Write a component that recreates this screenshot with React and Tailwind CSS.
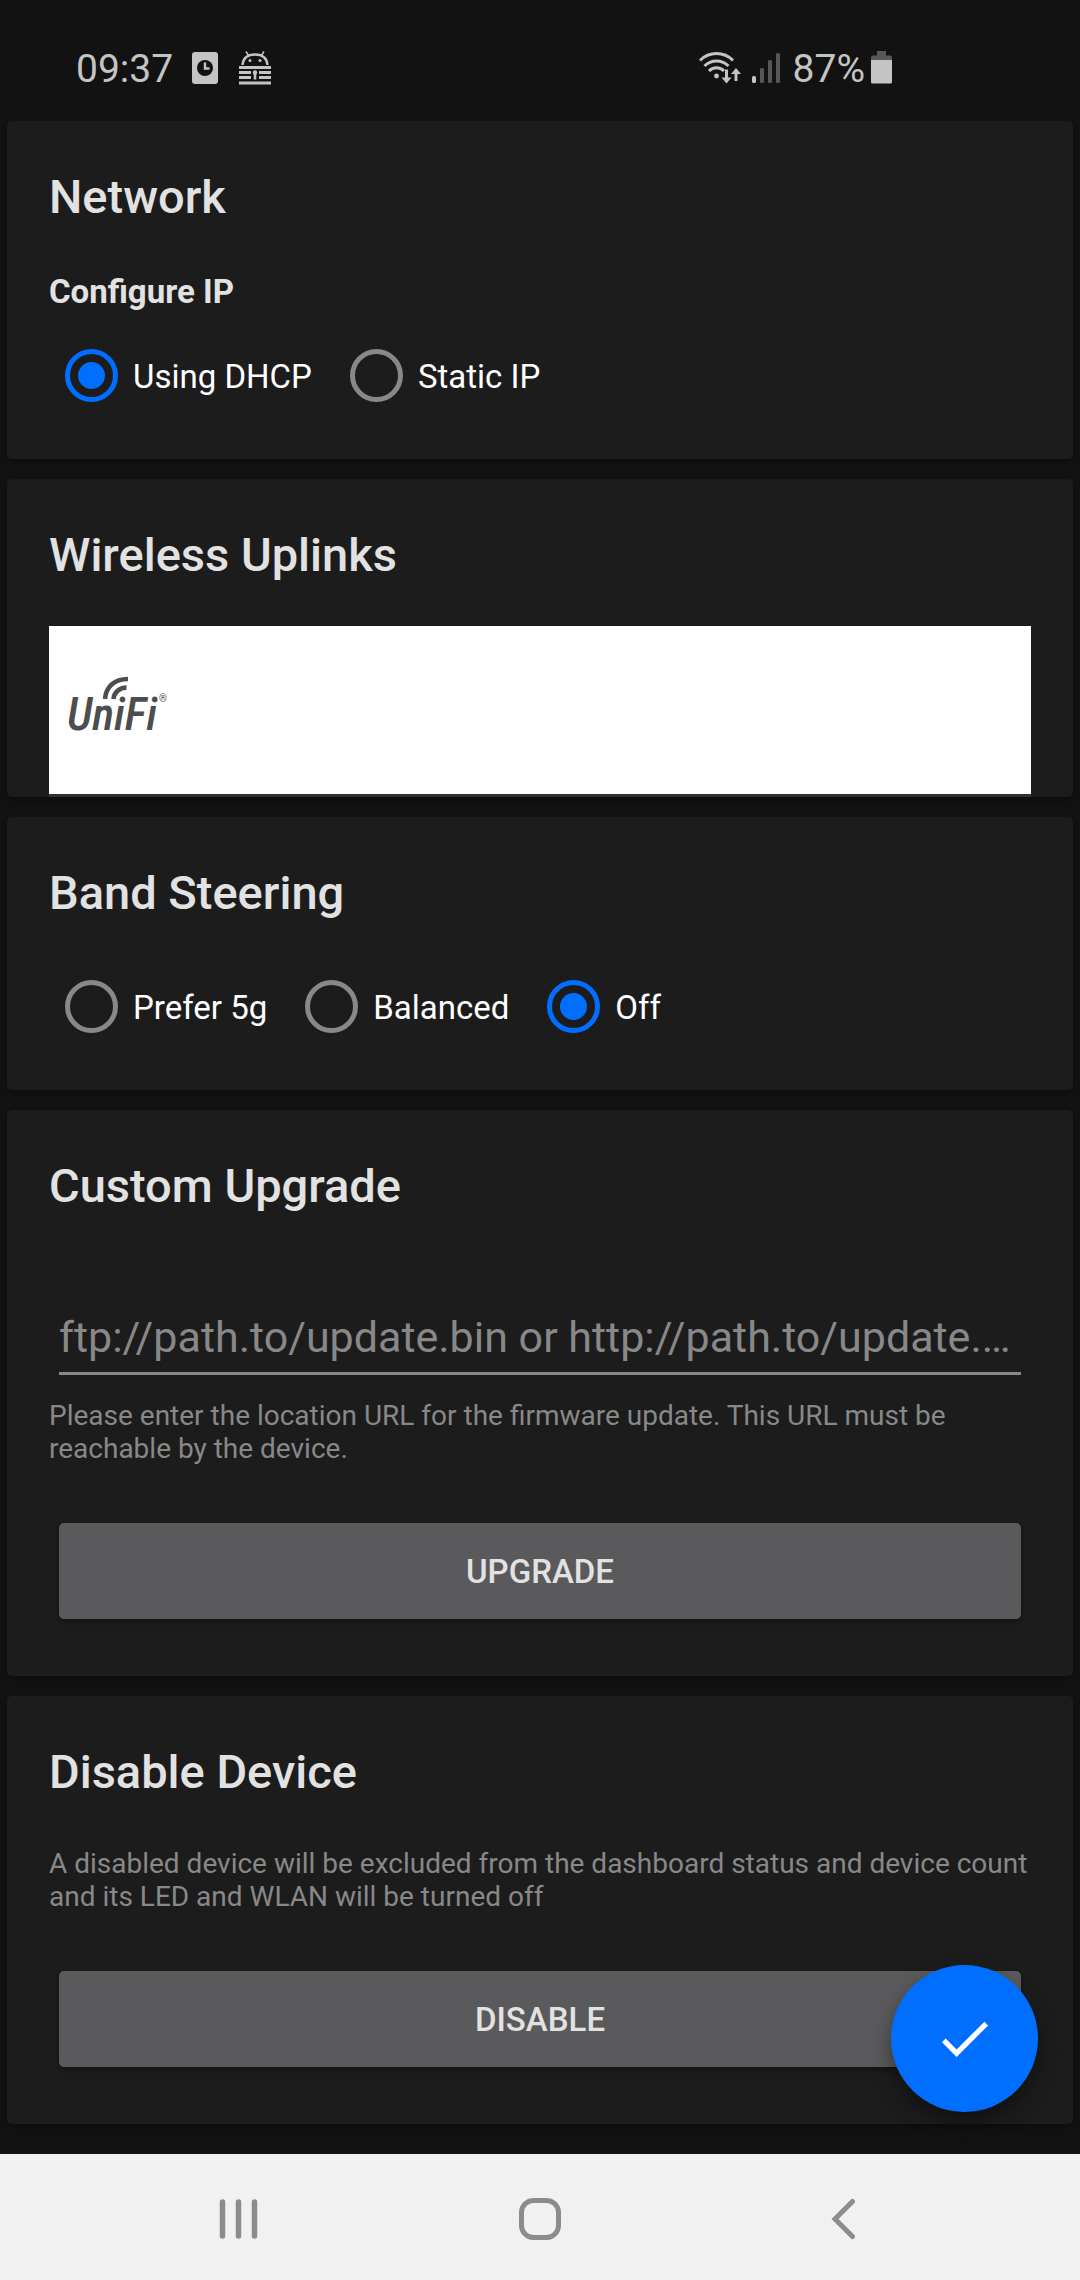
import React, { useState } from 'react';

const StatusBar = () => (
  <header className="flex h-[121px] items-center justify-between pt-[14px] pr-[188px] pl-[76px] text-[39px] leading-none text-[#c4c4c4]">
    <div className="flex items-center">
      <span className="pt-1">09:37</span>
      <svg className="ml-[19px] h-[32px] w-[26px]" viewBox="0 0 26 32">
        <rect width="26" height="32" rx="3" fill="#c4c4c4" />
        <circle cx="13" cy="16" r="8" fill="#121212" />
        <path d="M13 10.500v6h4.500" fill="none" stroke="#c4c4c4" strokeWidth="2.400" />
      </svg>
      <svg className="ml-[21px] h-[34px] w-[32px]" viewBox="0 0 32 34" fill="none" stroke="#c4c4c4">
        <path d="M7 .5l3 4.500M25 .5l-3 4.500" strokeWidth="1.500" />
        <path d="M3.500 14C4.200 6.500 9.500 3.500 16 3.500S27.800 6.500 28.500 14" strokeWidth="2.400" />
        <circle cx="11" cy="9.500" r="1.500" fill="#c4c4c4" stroke="none" />
        <circle cx="21" cy="9.500" r="1.500" fill="#c4c4c4" stroke="none" />
        <path d="M0 16.500h32M0 21.500h12M20 21.500h12M0 26.500h12M20 26.500h12M0 32h32" strokeWidth="3" />
        <circle cx="16" cy="21.500" r="2.200" fill="#c4c4c4" stroke="none" />
        <path d="M16 22v6.500" strokeWidth="2.600" />
      </svg>
    </div>
    <div className="flex items-center">
      <svg className="h-[32px] w-[42px]" viewBox="0 0 42 32" fill="none" stroke="#c4c4c4" strokeWidth="3">
        <path d="M1 8.500C10-.8 25-.8 34 8.500M5.500 14c6.500-6.800 17.500-6.800 24 0M10 19c4-4.200 11-4.200 15 0" />
        <circle cx="17.500" cy="24" r="2.400" fill="#c4c4c4" stroke="none" />
        <path d="M27.500 17.500v11M37 29V19" />
        <path d="M22.500 25.500h10l-5 6zM32 22h10l-5-6z" fill="#c4c4c4" stroke="none" />
      </svg>
      <svg className="ml-[11px] h-[32px] w-[28px]" viewBox="0 0 28 32" fill="#585858">
        <rect y="24" width="4" height="7" rx="1.500" fill="#c4c4c4" />
        <rect x="8" y="16" width="4" height="15" rx="1.500" />
        <rect x="16" y="8" width="4" height="23" rx="1.500" />
        <rect x="24" y="1" width="4" height="30" rx="1.500" />
      </svg>
      <span className="ml-[13px] pt-1">87%</span>
      <svg className="ml-[6px] h-[33px] w-[21px]" viewBox="0 0 21 33">
        <path d="M6 0h9v4.500h4a2 2 0 0 1 2 2V9H0V6.500a2 2 0 0 1 2-2h4z" fill="#585858" />
        <path d="M0 9h21v22a1.500 1.500 0 0 1-1.500 1.500h-18A1.500 1.500 0 0 1 0 31z" fill="#c4c4c4" />
      </svg>
    </div>
  </header>
);

const Card = ({ title, className = 'pb-[57px]', children }) => (
  <section className={`rounded-[5px] bg-[#1c1c1c] px-[42px] pt-[48px] shadow-[0_3px_6px_rgba(0,0,0,0.3)] ${className}`}>
    <h2 className="text-[47px] leading-[56px] font-medium">{title}</h2>
    {children}
  </section>
);

const RadioGroup = ({ name, options, value, onChange, className }) => (
  <div role="radiogroup" aria-label={name} className={`flex flex-wrap gap-[38px] pl-[16px] ${className}`}>
    {options.map(option => (
      <label key={option} className="flex items-center gap-[15px] text-[33px] leading-[40px] text-white">
        <input
          type="radio"
          name={name}
          checked={value === option}
          onChange={() => onChange(option)}
          className="grid size-[53px] appearance-none place-content-center rounded-full border-5 border-[#888888] before:size-[27px] before:rounded-full checked:border-[#006fff] checked:before:bg-[#006fff]"
        />
        <span className="pt-[2px]">{option}</span>
      </label>
    ))}
  </div>
);

const HelpText = ({ className, children, id }) => (
  <p id={id} className={`text-[28px] leading-[33px] text-[#888888] ${className}`}>{children}</p>
);

const ActionButton = ({ children }) => (
  <div className="mt-[58px] px-[10px]">
    <button className="block h-[96px] w-full rounded-[5px] bg-[#5a5a5c] pt-[2px] text-[33px] leading-[40px] font-medium shadow-[0_3px_5px_rgba(0,0,0,0.3)]">
      {children}
    </button>
  </div>
);

const UnifiLogo = () => (
  <svg className="h-[72px] w-[120px]" viewBox="0 0 120 72" role="img" aria-label="UniFi">
    <text
      x="0"
      y="56"
      fill="#4d4d4d"
      className="font-['Roboto_Condensed','Liberation_Sans_Narrow',Roboto,sans-serif] text-[46px] font-medium italic"
    >
      UniFi
    </text>
    <path d="M38 25C39 13 47 5 61 5M46.500 25c.5-6 5.500-11.500 13-11.500" fill="none" stroke="#4d4d4d" strokeWidth="4.500" />
    <text x="92" y="28" fill="#4d4d4d" className="text-[10px]">®</text>
  </svg>
);

const NavBar = () => (
  <nav className="flex h-[126px] justify-center bg-[#f1f1f1] pt-[3px]">
    <button aria-label="Recents" className="grid w-[302px] place-content-center">
      <svg className="h-[42px] w-[42px]" viewBox="0 0 42 42" stroke="#8c8c8c" strokeWidth="5.500" strokeLinecap="round">
        <path d="M5.500 4v34M21.500 4v34M37.500 4v34" />
      </svg>
    </button>
    <button aria-label="Home" className="grid w-[302px] place-content-center">
      <svg className="h-[42px] w-[42px]" viewBox="0 0 42 42">
        <rect x="2.500" y="2.500" width="37" height="37" rx="12" fill="none" stroke="#8c8c8c" strokeWidth="5" />
      </svg>
    </button>
    <button aria-label="Back" className="grid w-[302px] place-content-center">
      <svg className="h-[42px] w-[42px]" viewBox="0 0 42 42" fill="none" stroke="#8c8c8c" strokeWidth="5" strokeLinecap="round">
        <path d="M31.500 3.500L14 21l17.500 17.500" />
      </svg>
    </button>
  </nav>
);

const App = () => {
  const [ipMode, setIpMode] = useState('Using DHCP');
  const [steering, setSteering] = useState('Off');
  const [url, setUrl] = useState('');

  return (
    <div className="flex min-h-screen flex-col bg-[#121212] font-[Roboto,sans-serif] text-[#e2e2e2]">
      <StatusBar />

      <main className="relative flex grow flex-col gap-[20px] px-[7px] pb-[30px]">
        <Card title="Network">
          <h3 className="mt-[47px] text-[33px] leading-[40px] font-bold">Configure IP</h3>
          <RadioGroup
            name="Configure IP"
            options={['Using DHCP', 'Static IP']}
            value={ipMode}
            onChange={setIpMode}
            className="mt-[37px]"
          />
        </Card>

        <Card title="Wireless Uplinks" className="pb-0">
          <div className="mt-[43px] flex h-[171px] items-start border-b-3 border-[#303030] bg-white pt-[48px] pl-[18px]">
            <UnifiLogo />
          </div>
        </Card>

        <Card title="Band Steering">
          <RadioGroup
            name="Band Steering"
            options={['Prefer 5g', 'Balanced', 'Off']}
            value={steering}
            onChange={setSteering}
            className="mt-[59px]"
          />
        </Card>

        <Card title="Custom Upgrade">
          <div className="mt-[96px] px-[10px]">
            <input
              type="text"
              aria-label="Firmware URL"
              aria-describedby="upgrade-help"
              value={url}
              onChange={e => setUrl(e.target.value)}
              placeholder="ftp://path.to/update.bin or http://path.to/update.bin"
              className="block h-[65px] w-full border-b-3 border-[#888888] pb-[8px] text-[43px] leading-[54px] text-ellipsis outline-none placeholder:text-[#888888]"
            />
          </div>
          <HelpText id="upgrade-help" className="mt-[24px]">
            Please enter the location URL for the firmware update. This URL must be reachable by the device.
          </HelpText>
          <ActionButton>UPGRADE</ActionButton>
        </Card>

        <Card title="Disable Device">
          <HelpText className="mt-[47px]">
            A disabled device will be excluded from the dashboard status and device count and its LED and WLAN will be turned off
          </HelpText>
          <ActionButton>DISABLE</ActionButton>
        </Card>

        {/* Floating save button */}
        <button
          aria-label="Save"
          className="absolute right-[42px] bottom-[42px] grid size-[147px] place-content-center rounded-full bg-[#006fff] shadow-[0_10px_20px_rgba(0,0,0,0.4)]"
        >
          <svg className="size-[63px]" viewBox="0 0 24 24" fill="#ffffff">
            <path d="M9 16.170L4.830 12l-1.420 1.410L9 19 21 7l-1.410-1.410z" />
          </svg>
        </button>
      </main>

      <NavBar />
    </div>
  );
};

export default App;
